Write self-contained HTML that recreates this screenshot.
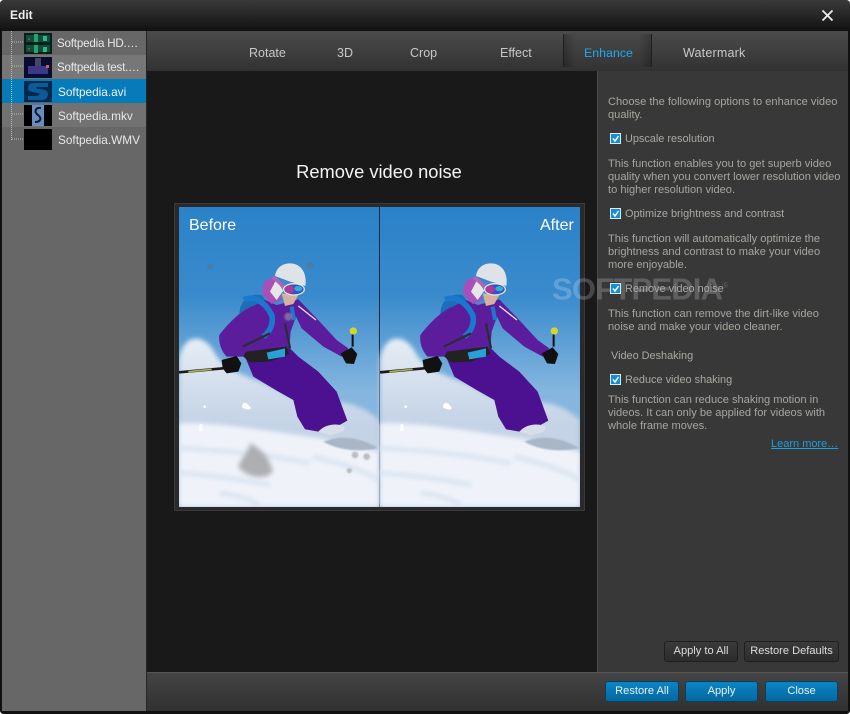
<!DOCTYPE html>
<html><head><meta charset="utf-8">
<style>
html,body{margin:0;padding:0;background:#fff;}
#w{position:relative;width:850px;height:714px;overflow:hidden;background:#222;font-family:"Liberation Sans",sans-serif;font-size:12px;border-radius:4px;}
#w div,#w span,#w a{position:absolute;white-space:nowrap;}
.t{color:#a9a9a4;line-height:13px;font-size:10.9px;margin-top:1px;}
.p{color:#a6a6a0;line-height:13px;font-size:11.1px;margin-top:1px;}
.tab{color:#c8c8c8;top:46px;font-size:12.5px;line-height:15px;}
.name{color:#e8e8e8;left:57px;line-height:14px;font-size:11.8px;}
.row{left:2px;width:144px;height:24px;}
.th{left:24px;width:28px;height:21px;background:#000;overflow:hidden;}
.cb{width:9px;height:9px;background:#0f8fe0;border:1px solid #e8e8e8;box-sizing:content-box;left:610px;}
.btn{height:19px;line-height:19px;text-align:center;font-size:11.1px;border-radius:3px;box-sizing:content-box;}
.b1{background:linear-gradient(#3a3a3a,#2c2c2c);border:1px solid #1f1f1f;color:#dcdcdc;top:641px;}
.b2{background:linear-gradient(#0b85c5,#05689f);border:1px solid #0d3f5c;color:#e8f2f8;top:681px;}
</style></head><body>
<div id="w">
<div style="left:0;top:0;width:850px;height:31px;background:linear-gradient(#3a3a3a,#111);"></div>
<div style="left:10px;top:8px;color:#f0f0f0;font-weight:bold;font-size:12px;line-height:14px;">Edit</div>
<svg style="position:absolute;left:820px;top:8px" width="16" height="16" viewBox="0 0 16 16"><path d="M2.5 2.5L12.5 12.5M12.5 2.5L2.5 12.5" stroke="#eee" stroke-width="1.8" fill="none"/></svg>

<div style="left:2px;top:31px;width:144px;height:680px;background:#676767;"></div>
<div class="row" style="top:55px;background:#777;"></div>
<div class="row" style="top:79px;background:#057cb9;"></div>
<div class="row" style="top:103px;background:#727272;"></div>
<svg style="position:absolute;left:0;top:31px" width="24" height="110"><path d="M11.5 0V109M12 11H23M12 35H23M12 83H23M12 108H23" stroke="#bbb" stroke-width="1" stroke-dasharray="1 1" fill="none"/></svg>

<div class="th" style="top:33px;background:#05201a;"><svg width="28" height="21"><rect x="2" y="2" width="24" height="7" fill="#0c4f3c"/><rect x="2" y="12" width="24" height="7" fill="#0c4f3c"/><rect x="10" y="1" width="4" height="8" fill="#2f9f70"/><rect x="19" y="3" width="4" height="5" fill="#3cb080"/><rect x="10" y="12" width="4" height="8" fill="#2f9f70"/><rect x="19" y="14" width="4" height="5" fill="#3cb080"/><rect x="4" y="5" width="2" height="2" fill="#a04030"/><rect x="4" y="15" width="2" height="2" fill="#a04030"/></svg></div>
<div class="th" style="top:57px;background:#0b0b30;"><svg width="28" height="21"><rect x="4" y="9" width="20" height="8" fill="#3a3a88"/><rect x="11" y="1" width="6" height="8" fill="#45456a"/><rect x="22" y="8" width="3" height="3" fill="#c86060"/></svg></div>
<div class="th" style="top:81px;background:#03294a;"><svg width="28" height="21"><path d="M24 2H9C5 2 4 5 4 7C4 11 9 11 14 12C17 13 15 15 12 15H4V19H18C23 19 24 15 24 13C24 9 19 8 14 8C11 7 12 6 14 6H24Z" fill="#0a5a9c"/></svg></div>
<div class="th" style="top:105px;"><svg width="28" height="21"><rect x="8" y="0" width="12" height="21" fill="#6a8cc0"/><path d="M17 3C11 2 10 7 14 10C18 13 17 17 11 17" stroke="#0c1a30" stroke-width="2" fill="none"/></svg></div>
<div class="th" style="top:129px;"></div>
<div class="name" style="top:37px;letter-spacing:-.2px;font-size:11.6px;">Softpedia HD.…</div>
<div class="name" style="top:61px;letter-spacing:-.2px;font-size:11.6px;">Softpedia test.…</div>
<div class="name" style="top:85px;left:58px;color:#f2f2f2;">Softpedia.avi</div>
<div class="name" style="top:109px;left:58px;">Softpedia.mkv</div>
<div class="name" style="top:133px;left:58px;">Softpedia.WMV</div>

<div style="left:146px;top:31px;width:1px;height:680px;background:#262626;"></div>
<div style="left:147px;top:31px;width:701px;height:40px;background:linear-gradient(#4b4b4b,#323232);"></div>
<div style="left:147px;top:71px;width:701px;height:601px;background:#191919;"></div>
<div style="left:564px;top:34px;width:87px;height:33px;background:linear-gradient(90deg,rgba(0,0,0,.22),rgba(0,0,0,0) 14%,rgba(0,0,0,0) 86%,rgba(0,0,0,.22));"></div>
<div style="left:563px;top:34px;width:1px;height:33px;background:#1f1f1f;"></div>
<div style="left:651px;top:34px;width:1px;height:33px;background:#1f1f1f;"></div>
<div class="tab" style="left:249px;">Rotate</div>
<div class="tab" style="left:337px;">3D</div>
<div class="tab" style="left:410px;">Crop</div>
<div class="tab" style="left:500px;">Effect</div>
<div class="tab" style="left:584px;color:#1ea8ef;font-size:12.4px;">Enhance</div>
<div class="tab" style="left:683px;letter-spacing:.2px;">Watermark</div>

<div style="left:597px;top:71px;width:251px;height:601px;background:#383838;border-left:1px solid #4a4a4a;box-sizing:border-box;"></div>

<div style="left:147px;top:162px;width:464px;text-align:center;color:#f4f4f4;font-size:18.3px;line-height:20px;">Remove video noise</div>
<div style="left:174px;top:203px;width:411px;height:308px;background:#2a2a2a;border:1px solid #3a3a3a;box-sizing:border-box;"></div>

<svg style="position:absolute;left:179px;top:207px" width="401" height="300" viewBox="0 0 401 300">
<defs>
<linearGradient id="sky" x1="0" y1="0" x2="0" y2="1"><stop offset="0" stop-color="#2b82c8"/><stop offset=".3" stop-color="#3a8bcd"/><stop offset=".62" stop-color="#86b6df"/></linearGradient>
<linearGradient id="sn" x1="0" y1="0" x2="0" y2="1"><stop offset="0" stop-color="#e6edf5"/><stop offset=".5" stop-color="#c4d3e6"/><stop offset="1" stop-color="#c4d3e6"/></linearGradient>
<filter id="b3"><feGaussianBlur stdDeviation="7"/></filter>
<filter id="b1"><feGaussianBlur stdDeviation="2"/></filter>
<g id="scene">
<rect x="27" y="21" width="600" height="900" fill="url(#sky)"/>
<path d="M27 480C40 395 105 400 135 460C175 530 260 525 350 585C440 630 530 570 627 660V921H27Z" fill="url(#sn)" filter="url(#b3)"/>
<path d="M27 670C150 665 300 695 450 715L627 755V921H27Z" fill="#eff3f9" filter="url(#b3)"/>
<path d="M27 745C150 750 300 765 420 790M27 820C120 825 200 835 300 855M150 880C200 885 240 895 270 915M430 770C500 790 560 800 627 840" stroke="#d6e0ee" stroke-width="12" fill="none" filter="url(#b3)"/>
<path d="M460 725C510 705 570 710 625 745C580 755 510 755 460 725Z" fill="#a9b6c8" filter="url(#b1)"/>
<path d="M240 620C225 600 215 610 216 622C232 632 248 630 240 620Z" fill="#fff"/>
<circle cx="104" cy="620" r="4" fill="#fff"/><rect x="88" y="672" width="9" height="22" rx="4" fill="#fff"/>
<path d="M27 517L160 505" stroke="#1a1a1a" stroke-width="8"/><path d="M55 515L125 508" stroke="#a9b45c" stroke-width="5"/>
<path d="M548 440V400" stroke="#111" stroke-width="6"/><circle cx="550" cy="393" r="11" fill="#d5d62a"/>
<path d="M208 345C208 300 240 278 275 285L300 320L225 360Z" fill="#1a6fb8"/>
<path d="M225 470L355 440L385 470L445 515L500 575L532 662L500 680L445 695L405 688L382 650L370 600L320 572L250 530Z" fill="#4c1190"/>
<path d="M148 405C175 370 215 330 245 320L285 300L320 315L385 298L440 355L500 420L535 445L515 470L460 440L395 385L378 350L362 395L358 445L225 470L205 470L170 470C155 455 145 430 148 405Z" fill="#5c1d9d"/>
<path d="M385 318L438 360" stroke="#e4e0ee" stroke-width="4" fill="none"/>
<path d="M222 300C250 285 285 305 305 345C312 370 300 395 280 410" stroke="#1b78cc" stroke-width="17" fill="none"/>
<path d="M365 320L372 360" stroke="#1b78cc" stroke-width="12" fill="none"/>
<path d="M290 240L310 232L335 300L305 312L278 285C275 265 278 250 290 240Z" fill="#a94fba"/>
<path d="M300 275L318 240L340 272L320 300Z" fill="#e6e6e6"/>
<path d="M335 280L385 285L370 312L345 318Z" fill="#d9b0a0"/>
<path d="M228 455L350 440L358 462L300 485L240 487L220 470Z" fill="#222"/>
<path d="M290 458L345 445L345 470L295 478Z" fill="#2aa0d8"/>
<path d="M218 440L300 400M345 370L360 445" stroke="#2c2c36" stroke-width="7" fill="none"/>
<path d="M315 228C318 205 335 190 360 190C392 190 412 218 406 258L360 245Z" fill="#dfe3e7"/>
<path d="M308 232C325 242 335 255 345 265" stroke="#b462b8" stroke-width="11" fill="none"/>
<ellipse cx="372" cy="268" rx="33" ry="19" fill="#e8e8e8"/><ellipse cx="372" cy="268" rx="29" ry="15" fill="#3a4fc0"/><ellipse cx="358" cy="268" rx="13" ry="12" fill="#b03898"/><ellipse cx="385" cy="266" rx="12" ry="8" fill="#2fb0d0"/>
<path d="M155 480L200 468L214 490L205 515L170 520L158 505Z" fill="#111"/>
<path d="M512 460L545 442L562 462L552 492L528 490Z" fill="#111"/>
<path d="M445 695C465 672 500 668 525 680L520 695L480 707Z" fill="#d8dee8"/>
</g>
</defs>
<g transform="scale(.3333) translate(-27 -21)"><use href="#scene"/>
<g fill="#5a7590" opacity=".7" filter="url(#b1)"><circle cx="120" cy="200" r="8"/><circle cx="420" cy="196" r="10"/></g>
<g fill="#9a9a98" opacity=".6" filter="url(#b1)"><circle cx="355" cy="350" r="12"/><circle cx="555" cy="765" r="10"/><circle cx="590" cy="770" r="10"/><circle cx="538" cy="812" r="8"/></g>
<path d="M240 730C275 745 305 785 308 815C285 845 225 830 205 800C212 775 232 765 240 730Z" fill="#a6a8ab" filter="url(#b3)" opacity=".9"/>
</g>
<rect x="200" y="0" width="1" height="300" fill="#1f2a3a"/>
<g transform="translate(201 0) scale(.3333) translate(-27 -21)"><use href="#scene"/></g>
</svg>
<div style="left:189px;top:217px;color:#fff;font-size:16px;line-height:18px;">Before</div>
<div style="left:540px;top:217px;color:#fff;font-size:16px;line-height:18px;">After</div>

<div class="p" style="left:608px;top:95px;">Choose the following options to enhance video</div>
<div class="p" style="left:608px;top:108px;">quality.</div>
<div class="cb" style="top:133px;"></div>
<div class="t" style="left:625px;top:132px;">Upscale resolution</div>
<div class="p" style="left:608px;top:157px;">This function enables you to get superb video</div>
<div class="p" style="left:608px;top:170px;">quality when you convert lower resolution video</div>
<div class="p" style="left:608px;top:183px;">to higher resolution video.</div>
<div class="cb" style="top:208px;"></div>
<div class="t" style="left:625px;top:207px;">Optimize brightness and contrast</div>
<div class="p" style="left:608px;top:232px;">This function will automatically optimize the</div>
<div class="p" style="left:608px;top:245px;">brightness and contrast to make your video</div>
<div class="p" style="left:608px;top:258px;">more enjoyable.</div>
<div style="left:552px;top:268px;color:rgba(255,255,255,.2);font-size:31px;font-weight:bold;line-height:36px;letter-spacing:-.8px;">SOFTPEDIA<span style="position:static;font-size:8px;vertical-align:super;font-weight:normal;">®</span></div>
<div class="cb" style="top:283px;"></div>
<div class="t" style="left:625px;top:282px;">Remove video noise</div>
<div class="p" style="left:608px;top:307px;">This function can remove the dirt-like video</div>
<div class="p" style="left:608px;top:320px;">noise and make your video cleaner.</div>
<div class="t" style="left:611px;top:349px;">Video Deshaking</div>
<div class="cb" style="top:374px;"></div>
<div class="t" style="left:625px;top:373px;">Reduce video shaking</div>
<div class="p" style="left:608px;top:393px;">This function can reduce shaking motion in</div>
<div class="p" style="left:608px;top:406px;">videos. It can only be applied for videos with</div>
<div class="p" style="left:608px;top:419px;">whole frame moves.</div>
<div style="left:771px;top:438px;color:#1e9fdc;text-decoration:underline;line-height:13px;font-size:11px;">Learn more…</div>
<svg style="position:absolute;left:610px;top:133px" width="13" height="260" fill="none" stroke="#fff" stroke-width="1.5"><path d="M3 5.5L5 8L8.5 3"/><path d="M3 80.5L5 83L8.5 78"/><path d="M3 155.5L5 158L8.5 153"/><path d="M3 246.5L5 249L8.5 244"/></svg>

<div class="btn b1" style="left:664px;width:72px;">Apply to All</div>
<div class="btn b1" style="left:744px;width:93px;">Restore Defaults</div>

<div style="left:147px;top:672px;width:701px;height:1px;background:#555;"></div>
<div style="left:147px;top:673px;width:701px;height:38px;background:linear-gradient(#444,#313131);"></div>
<div class="btn b2" style="left:605px;width:72px;">Restore All</div>
<div class="btn b2" style="left:685px;width:71px;">Apply</div>
<div class="btn b2" style="left:765px;width:71px;">Close</div>
<div style="left:848px;top:31px;width:2px;height:683px;background:#111;"></div>
<div style="left:0;top:31px;width:2px;height:683px;background:#111;"></div>
<div style="left:0;top:711px;width:850px;height:3px;background:#111;"></div>
</div>
</body></html>
